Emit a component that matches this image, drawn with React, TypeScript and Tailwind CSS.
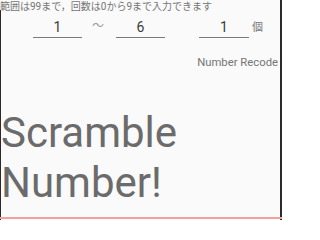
import React from 'react';

const NumField: React.FC<{ value: string; className?: string }> = ({ value, className = '' }) => (
  <div className={`h-[22px] border-b border-[#7a7a7a] flex items-end justify-center ${className}`}>
    <span className="text-[14px] leading-[20px] text-[#3c3c3c]">{value}</span>
  </div>
);

export default function App() {
  return (
    <div
      className="relative w-[282px] h-[220px] bg-[#fafafa] overflow-hidden text-[#757575]"
      style={{ fontFamily: 'Roboto, "Noto Sans CJK JP", sans-serif' }}
    >
      {/* window frame edges */}
      <div className="absolute left-0 top-[10px] bottom-0 w-px bg-[#2a2a2a]" />
      <div className="absolute right-0 top-0 bottom-0 w-[2px] bg-[#2a2a2a]" />
      <div className="absolute left-0 right-0 bottom-[1px] h-[2px] bg-[#f4a0a0]" />

      <p className="text-[10px] leading-[12px] pt-px whitespace-nowrap">範囲は99まで，回数は0から9まで入力できます</p>

      {/* input row */}
      <div className="flex items-end mt-[3px] pl-[33px]">
        <NumField value="1" className="w-[49px]" />
        <span className="ml-[10px] mb-[6px] text-[12px] leading-[12px] text-[#9a9a9a]">～</span>
        <NumField value="6" className="ml-[12px] w-[49px]" />
        <NumField value="1" className="ml-[34px] w-[50px]" />
        <span className="ml-[3px] mb-[4px] text-[11px] leading-[12px] text-[#757575]">個</span>
      </div>

      <div className="flex justify-end pr-[4px] mt-[18px]">
        <span className="text-[11.3px] leading-[14px]">Number Recode</span>
      </div>

      <h1 className="mt-[38px] pl-px text-[42px] leading-[50px] text-[#6b6b6b] font-normal">
        Scramble
        <br />
        Number!
      </h1>
    </div>
  );
}
